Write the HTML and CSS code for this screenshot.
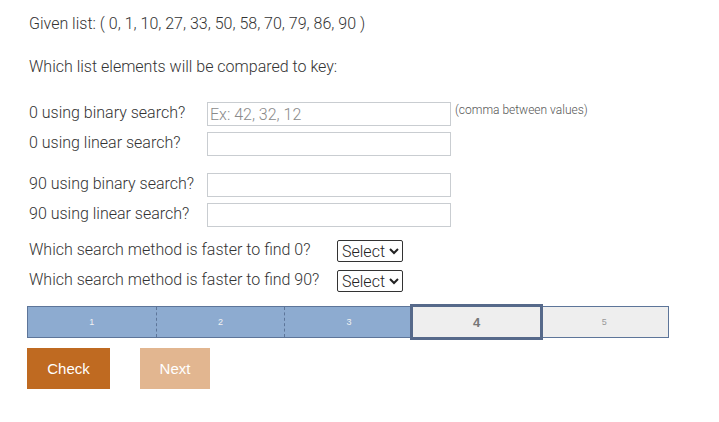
FILE: index.html
```html
<!DOCTYPE html>
<html>
<head>
<meta charset="utf-8">
<link rel="stylesheet" href="styles.css">
</head>
<body>
<div class="page">
  <p class="given">Given list: ( 0, 1, 10, 27, 33, 50, 58, 70, 79, 86, 90 )</p>
  <p class="prompt">Which list elements will be compared to key:</p>

  <div class="group">
    <div class="row">
      <label class="lbl">0 using binary search?</label>
      <input class="field" type="text" placeholder="Ex: 42, 32, 12">
      <span class="hint">(comma between values)</span>
    </div>
    <div class="row">
      <label class="lbl">0 using linear search?</label>
      <input class="field" type="text">
    </div>
  </div>

  <div class="group second">
    <div class="row">
      <label class="lbl">90 using binary search?</label>
      <input class="field" type="text">
    </div>
    <div class="row">
      <label class="lbl">90 using linear search?</label>
      <input class="field" type="text">
    </div>
  </div>

  <div class="group selects">
    <div class="row">
      <label class="lbl wide">Which search method is faster to find 0?</label>
      <select class="choice"><option>Select</option><option>Binary</option><option>Linear</option></select>
    </div>
    <div class="row">
      <label class="lbl wide">Which search method is faster to find 90?</label>
      <select class="choice"><option>Select</option><option>Binary</option><option>Linear</option></select>
    </div>
  </div>

  <div class="progress">
    <div class="seg done">1</div>
    <div class="seg done">2</div>
    <div class="seg done last-done">3</div>
    <div class="seg current">4</div>
    <div class="seg todo">5</div>
  </div>

  <div class="actions">
    <button class="btn check">Check</button>
    <button class="btn next">Next</button>
  </div>
</div>
</body>
</html>
```

FILE: styles.css
```css
html, body {
  margin: 0;
  padding: 0;
  background: #ffffff;
}

.page {
  padding: 14px 0 0 27px;
  width: 642px;
  font-family: Roboto, "Liberation Sans", sans-serif;
  font-size: 16px;
  font-weight: 300;
  color: #333333;
}

p {
  margin: 0;
  line-height: 20px;
  padding-left: 2px;
}

.given {
  margin-bottom: 23px;
}

.prompt {
  margin-bottom: 25px;
}

.group {
  display: flex;
  flex-direction: column;
  gap: 6px;
  margin-bottom: 17px;
}

.group.second {
  margin-bottom: 13px;
}

.group.selects {
  gap: 8px;
  margin-bottom: 14px;
}

.row {
  display: flex;
  align-items: center;
  height: 24px;
}

.selects .row {
  height: 22px;
}

.lbl {
  width: 178px;
  padding-left: 2px;
  flex: none;
  line-height: 20px;
  position: relative;
  top: -1px;
}

.lbl.wide {
  width: 308px;
}

.field {
  box-sizing: border-box;
  width: 244px;
  height: 24px;
  border: 1px solid #c9cdd1;
  border-radius: 0;
  padding: 0 2px;
  margin: 0;
  font-family: Roboto, "Liberation Sans", sans-serif;
  font-weight: 300;
  font-size: 16px;
  color: #333;
  outline: none;
}

.field::placeholder {
  color: #8a8a8a;
}

.hint {
  margin-left: 4px;
  font-size: 12px;
  color: #555555;
  align-self: flex-start;
  line-height: 16px;
}

.choice {
  box-sizing: border-box;
  height: 22px;
  font-family: Roboto, "Liberation Sans", sans-serif;
  font-weight: 300;
  font-size: 16px;
  color: #222;
  border: 1px solid #333;
  border-radius: 2px;
  padding: 0;
  margin: 0;
  background: #fff;
}

.progress {
  display: flex;
  height: 30px;
  border: 1px solid #5d7599;
  background: #eeeeee;
  font-family: "Liberation Sans", Arial, sans-serif;
  font-weight: normal;
}

.seg {
  flex: 1 1 0;
  display: flex;
  align-items: center;
  justify-content: center;
  font-size: 9px;
}

.seg.done {
  background: #8dabd0;
  color: #f2f2f2;
  border-right: 1px dashed #5d7599;
}

.seg.done.last-done {
  border-right: none;
}

.seg.current {
  position: relative;
  outline: 3px solid #56698a;
  background: #eeeeee;
  color: #777777;
  font-size: 13px;
  font-weight: bold;
}

.seg.todo {
  color: #999999;
}

.actions {
  display: flex;
  gap: 30px;
  margin-top: 10px;
}

.btn {
  height: 41px;
  border: none;
  border-radius: 0;
  color: #ffffff;
  font-family: "Liberation Sans", Arial, sans-serif;
  font-size: 15px;
  padding: 0;
  margin: 0;
  cursor: pointer;
}

.btn.check {
  width: 83px;
  background: #bf6a21;
}

.btn.next {
  width: 70px;
  background: #e2b690;
}
```
